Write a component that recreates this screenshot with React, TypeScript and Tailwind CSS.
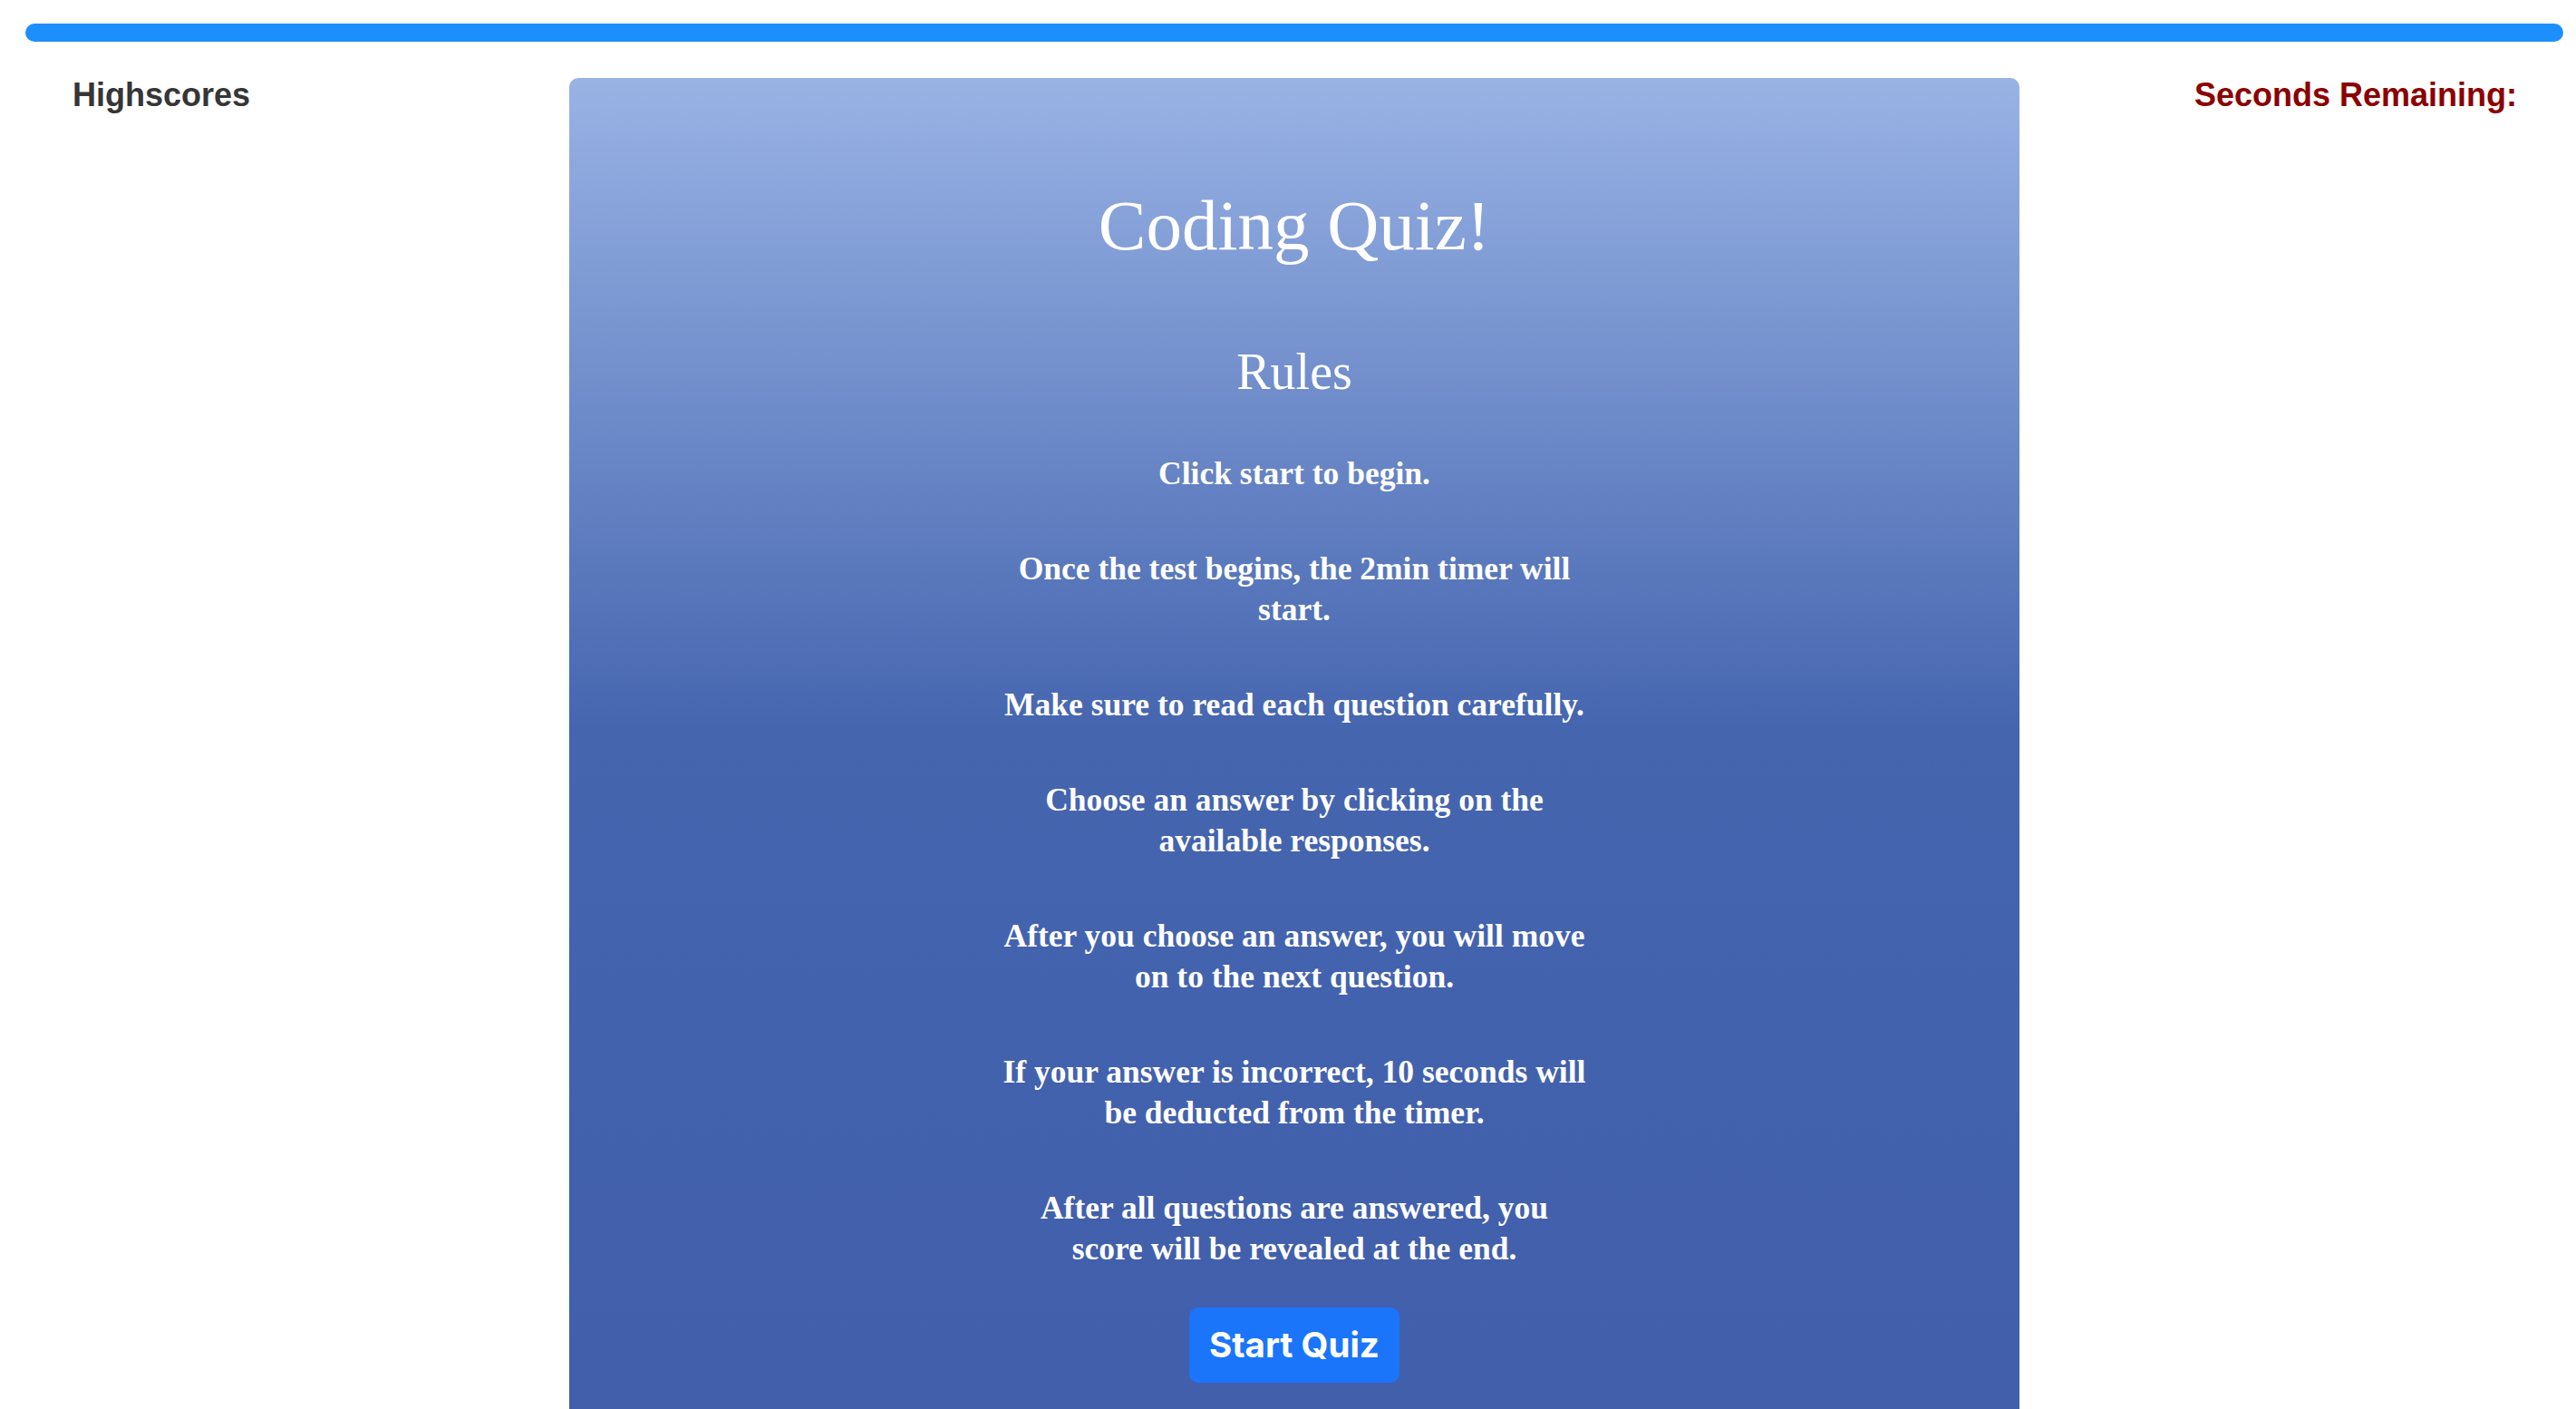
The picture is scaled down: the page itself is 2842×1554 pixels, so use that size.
const rules: string[][] = [
  ["Click start to begin."],
  ["Once the test begins, the 2min timer will", "start."],
  ["Make sure to read each question carefully."],
  ["Choose an answer by clicking on the", "available responses."],
  ["After you choose an answer, you will move", "on to the next question."],
  ["If your answer is incorrect, 10 seconds will", "be deducted from the timer."],
  ["After all questions are answered, you", "score will be revealed at the end."],
];

function Rule({ lines }: { lines: string[] }) {
  return (
    <p className="text-[35.5px] leading-[45px] font-bold text-white whitespace-nowrap">
      {lines.map((l, i) => (
        <span key={i} className="block">
          {l}
        </span>
      ))}
    </p>
  );
}

export default function App() {
  return (
    <div className="min-h-screen bg-white font-['Liberation_Sans',Arial,sans-serif]">
      {/* progress bar */}
      <div className="pt-[26px] ml-[28px] mr-[14px]">
        <div className="h-[20px] rounded-full bg-[#1c8ffd]" />
      </div>

      <div className="flex items-start mt-[38px]">
        <div className="w-[628px] shrink-0 pl-[80px]">
          <a className="text-[36px] leading-[41px] font-bold text-[#363636] cursor-pointer">Highscores</a>
        </div>

        <main className="w-[1600px] shrink-0 mt-[2px] rounded-[10px] bg-[linear-gradient(180deg,#99b3e5_0px,#4565af_720px,#415fab_1400px)] pt-[116px] pb-[60px] flex flex-col items-center text-center font-['Liberation_Serif','Times_New_Roman',serif] text-white">
          <h1 className="text-[79px] leading-[94px] font-normal">Coding Quiz!</h1>
          <h2 className="mt-[80px] text-[56px] leading-[68px] font-normal">Rules</h2>

          <div className="mt-[56px] flex flex-col items-center gap-[60px]">
            {rules.map((r, i) => (
              <Rule key={i} lines={r} />
            ))}
          </div>

          <button className="mt-[42px] w-[232px] h-[83px] rounded-[10px] bg-[#1b75fb] text-white text-[38.5px] font-bold font-['Inter',sans-serif] flex items-center justify-center">
            Start Quiz
          </button>
        </main>

        <div className="flex-1 text-right pr-[65px]">
          <span className="text-[36px] leading-[41px] font-bold text-[#8b0000]">Seconds Remaining:</span>
        </div>
      </div>
    </div>
  );
}
